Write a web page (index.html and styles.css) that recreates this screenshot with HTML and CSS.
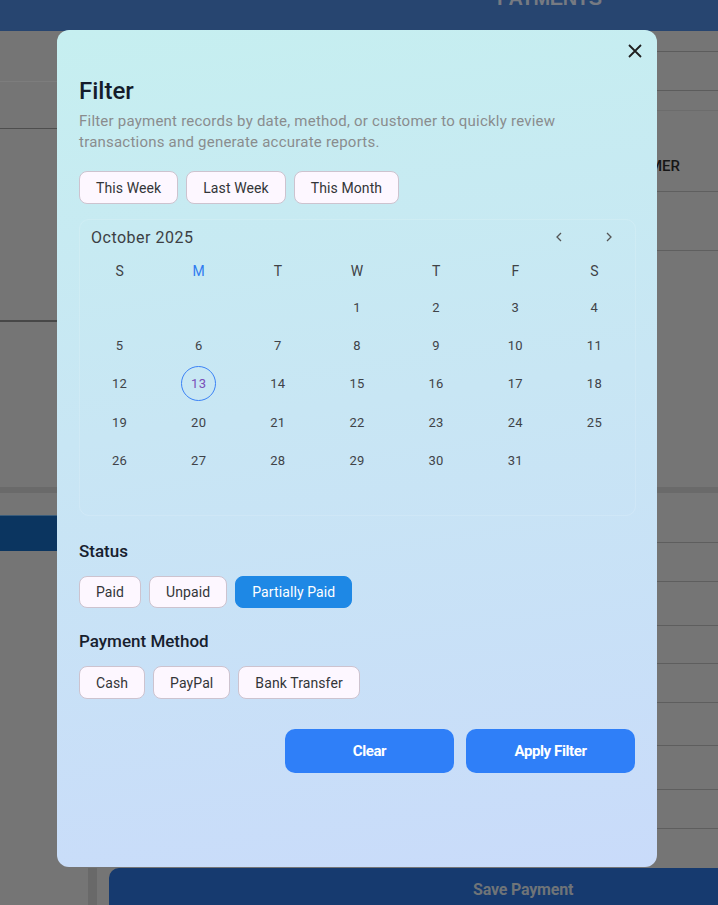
FILE: index.html
```html
<!DOCTYPE html>
<html>
<head>
<meta charset="utf-8">
<link rel="stylesheet" href="styles.css">
</head>
<body>
<div class="page">
  <header class="topbar"><span class="topbar-title">PAYMENTS</span></header>
  <div class="upper">
    <div class="upper-left">
      <div class="row r1"></div>
      <div class="row r2"></div>
      <div class="row r3"></div>
    </div>
    <div class="upper-right">
      <div class="row q1"></div>
      <div class="row q2"></div>
      <div class="row q3"></div>
      <div class="row q4"><span class="col-head">CUSTOMER</span></div>
      <div class="row q5"></div>
    </div>
  </div>
  <div class="band"></div>
  <div class="lower">
    <div class="lower-left"><div class="blue-band"></div></div>
    <div class="lower-right">
      <div class="trow t1"></div>
      <div class="trow t2"></div>
      <div class="trow t3"></div>
      <div class="trow t4"></div>
      <div class="trow t5"></div>
      <div class="trow t6"></div>
      <div class="trow t7"></div>
      <div class="trow t8"></div>
    </div>
  </div>
  <div class="footer">
    <div class="stripe"></div>
    <div class="save-btn">Save Payment</div>
  </div>
</div>

<div class="modal">
  <button class="close" aria-label="Close">
    <svg width="16" height="16" viewBox="0 0 16 16"><path d="M2 2 L14 14 M14 2 L2 14" stroke="#1f1f1f" stroke-width="1.8" fill="none"/></svg>
  </button>
  <h1 class="title">Filter</h1>
  <p class="subtitle">Filter payment records by date, method, or customer to quickly review transactions and generate accurate reports.</p>
  <div class="chips quick">
    <span class="chip">This Week</span>
    <span class="chip">Last Week</span>
    <span class="chip">This Month</span>
  </div>

  <div class="calendar">
    <div class="cal-head">
      <span class="cal-title">October 2025</span>
      <div class="cal-nav">
        <svg width="16" height="16" viewBox="0 0 16 16"><path d="M10 4 L6 8 L10 12" stroke="#555" stroke-width="1.3" fill="none"/></svg>
        <svg width="16" height="16" viewBox="0 0 16 16"><path d="M6 4 L10 8 L6 12" stroke="#555" stroke-width="1.3" fill="none"/></svg>
      </div>
    </div>
    <div class="cal-grid weekdays">
      <span>S</span><span class="today-col">M</span><span>T</span><span>W</span><span>T</span><span>F</span><span>S</span>
    </div>
    <div class="cal-grid days">
      <span></span><span></span><span></span><span>1</span><span>2</span><span>3</span><span>4</span>
      <span>5</span><span>6</span><span>7</span><span>8</span><span>9</span><span>10</span><span>11</span>
      <span>12</span><span><i class="sel">13</i></span><span>14</span><span>15</span><span>16</span><span>17</span><span>18</span>
      <span>19</span><span>20</span><span>21</span><span>22</span><span>23</span><span>24</span><span>25</span>
      <span>26</span><span>27</span><span>28</span><span>29</span><span>30</span><span>31</span><span></span>
      <span></span><span></span><span></span><span></span><span></span><span></span><span></span>
    </div>
  </div>

  <h2 class="section">Status</h2>
  <div class="chips">
    <span class="chip sm">Paid</span>
    <span class="chip sm">Unpaid</span>
    <span class="chip sm active">Partially Paid</span>
  </div>

  <h2 class="section pm">Payment Method</h2>
  <div class="chips">
    <span class="chip">Cash</span>
    <span class="chip">PayPal</span>
    <span class="chip">Bank Transfer</span>
  </div>

  <div class="actions">
    <button class="btn">Clear</button>
    <button class="btn">Apply Filter</button>
  </div>
</div>
</body>
</html>
```
FILE: styles.css
```css
* { box-sizing: border-box; }
html, body { margin: 0; padding: 0; }
body {
  width: 718px;
  height: 905px;
  overflow: hidden;
  background: #757575;
  font-family: Roboto, "Noto Sans", sans-serif;
}

/* ---------- dimmed background page ---------- */
.page { width: 718px; height: 905px; display: flex; flex-direction: column; }
.topbar {
  height: 31px;
  background: #274570;
  display: flex;
  align-items: flex-start;
  padding-left: 497px;
  overflow: hidden;
}
.topbar-title {
  margin-top: -14px;
  font-family: "Liberation Sans", Arial, sans-serif;
  font-weight: 700;
  font-size: 20px;
  line-height: 24px;
  color: #767a82;
  letter-spacing: -0.4px;
}
.upper { height: 456px; display: grid; grid-template-columns: 359px 359px; }
.upper-left, .upper-right { display: flex; flex-direction: column; }
.r1 { height: 51px; border-bottom: 1px solid #7d7d7d; }
.r2 { height: 47px; border-bottom: 1px solid #4e4e4e; }
.r3 { height: 193px; border-bottom: 2px solid #474747; }
.q1 { height: 21px; border-bottom: 1px solid #5c5c5c; }
.q2 { height: 39px; border-bottom: 1px solid #5c5c5c; }
.q3 { height: 20px; border-bottom: 1px solid #6c6c6c; }
.q4 {
  height: 81px; border-bottom: 1px solid #5f5f5f;
  display: flex; align-items: center; padding-left: 242px; padding-top: 30px;
}
.q5 { height: 59px; border-bottom: 1px solid #5f5f5f; }
.col-head { font-size: 15px; font-weight: 500; color: #161616; letter-spacing: 0; }
.band { height: 6px; background: #6a6a6a; }
.lower { height: 375px; display: grid; grid-template-columns: 359px 359px; }
.blue-band { margin-top: 22px; height: 36px; background: #0b3560; border-top: 1px solid #3a5c7a; }
.lower-right { display: flex; flex-direction: column; }
.trow { border-bottom: 1px solid #5e5e5e; }
.t1 { height: 50px; }
.t2 { height: 39px; }
.t3 { height: 44px; }
.t4 { height: 38px; }
.t5 { height: 39px; }
.t6 { height: 43px; }
.t7 { height: 44px; }
.t8 { height: 39px; }
.footer { height: 37px; display: flex; }
.stripe { margin-left: 88px; width: 9px; background: #696969; }
.save-btn {
  margin-left: 12px;
  flex: 1;
  background: #163a6f;
  border-top-left-radius: 10px;
  display: flex; align-items: center; justify-content: flex-start;
  padding-left: 364px; padding-top: 6px;
  font-size: 16px; font-weight: 700; color: #6f7478;
  letter-spacing: -0.2px;
}

/* ---------- modal ---------- */
.modal {
  position: absolute;
  left: 57px; top: 30px;
  width: 600px; height: 837px;
  border-radius: 12px;
  background: linear-gradient(172deg, #c6eff0 0%, #c8e6f4 45%, #c9dbfa 100%);
  padding: 47px 22px 0 22px;
  display: flex; flex-direction: column;
}
.close {
  position: absolute; top: 13px; right: 14px;
  width: 16px; height: 16px; padding: 0; border: 0; background: none;
  display: block;
}
.close svg { display: block; }
.title {
  margin: 0;
  font-size: 24px; font-weight: 500; line-height: 28px;
  color: #151c2b;
}
.subtitle {
  margin: 6px 0 0 0;
  width: 500px;
  font-size: 15px; line-height: 21px;
  color: #8a8c8e;
  letter-spacing: 0.22px;
}
.chips { display: flex; gap: 8px; }
.quick { margin-top: 18px; }
.chip {
  height: 33px;
  padding: 0 16px;
  display: inline-flex; align-items: center;
  border: 1px solid #cdc3cf;
  background: #fdf7ff;
  border-radius: 8px;
  font-size: 14px; color: #333538; letter-spacing: 0.1px;
}
.chip.sm { height: 32px; }
.chip.active {
  background: #1e88e5; border-color: #1e88e5; color: #ffffff;
}

/* calendar */
.calendar {
  margin-top: 15px;
  width: 557px;
  height: 297px;
  border-radius: 10px;
  border: 1px solid rgba(255,255,255,0.14);
  padding: 0 1px 0 0;
}
.cal-head {
  height: 34px;
  display: flex; align-items: center; justify-content: space-between;
  padding: 0 17px 0 11px;
}
.cal-title { font-size: 16px; color: #3c3f44; letter-spacing: 0.5px; }
.cal-nav { display: flex; gap: 34px; align-items: center; }
.cal-nav svg { display: block; }
.cal-grid { display: grid; grid-template-columns: repeat(7, 1fr); text-align: center; }
.weekdays { height: 34px; align-items: center; font-size: 14px; color: #3f4246; }
.weekdays .today-col { color: #2f7bf0; }
.days { grid-auto-rows: 38.3px; align-items: center; font-size: 13px; color: #404348; letter-spacing: 0.3px; }
.days span { display: flex; justify-content: center; align-items: center; height: 38.3px; }
.sel {
  font-style: normal;
  width: 35px; height: 35px; border-radius: 50%;
  border: 1px solid #3b82f6;
  color: #7a4fb8;
  display: flex; align-items: center; justify-content: center;
}

.section {
  margin: 24px 0 14px 0;
  font-size: 17px; font-weight: 500; line-height: 22px;
  color: #17202e;
}
.section.pm { margin-top: 22px; margin-bottom: 14px; }

.actions {
  margin-top: 30px;
  display: flex; justify-content: flex-end; gap: 12px;
  padding-right: 0;
}
.btn {
  width: 169px; height: 44px;
  border: 0; border-radius: 10px;
  background: #2f7ff8;
  color: #ffffff;
  font-family: Roboto, sans-serif;
  font-size: 15px; font-weight: 700; letter-spacing: -0.4px;
}
```
